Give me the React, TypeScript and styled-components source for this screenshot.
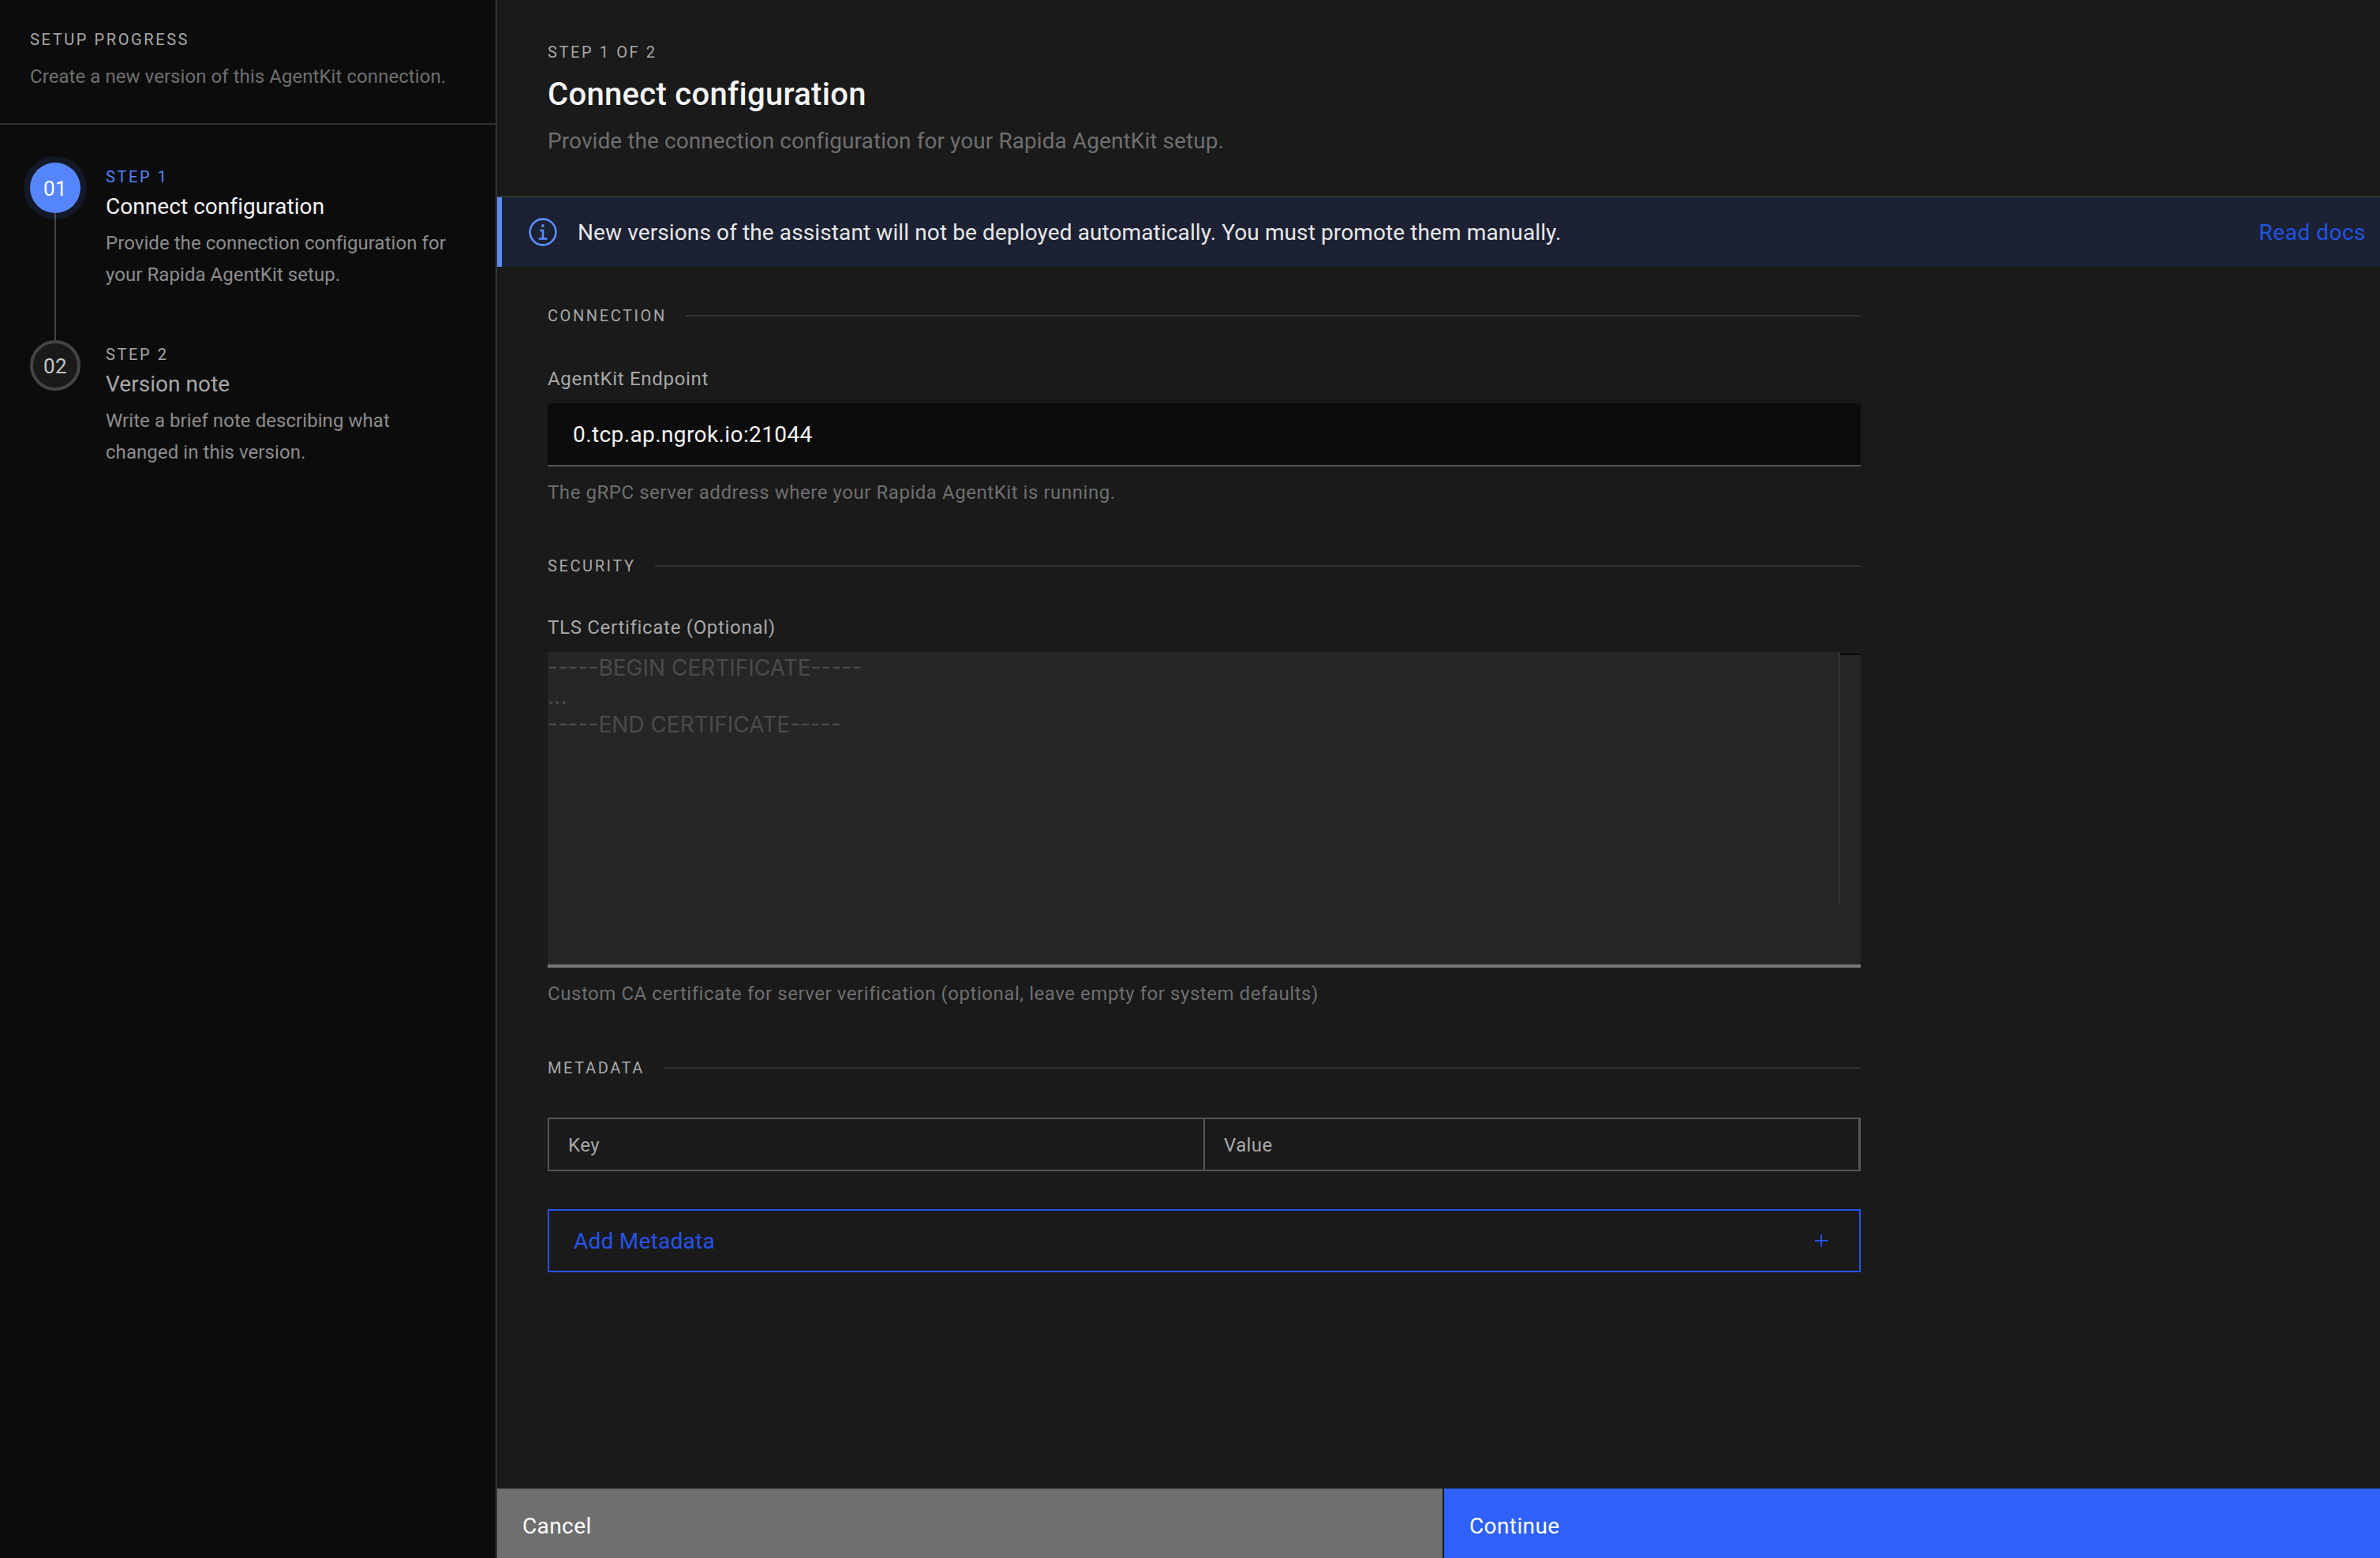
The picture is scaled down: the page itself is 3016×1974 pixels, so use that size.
import React from "react";
import styled, { createGlobalStyle } from "styled-components";

const Global = createGlobalStyle`
  html, body { margin: 0; padding: 0; background: #1a1a1a; }
  * { box-sizing: border-box; }
`;
const font = `"Roboto", "Liberation Sans", sans-serif`;

const Shell = styled.div`
  display: grid; grid-template-columns: 630px 1fr; height: 1974px; width: 3016px; overflow: hidden;
  font-family: ${font}; background: #1a1a1a;
`;
const Sidebar = styled.aside`
  background: #0c0c0c; border-right: 2px solid #333; display: flex; flex-direction: column;
`;
const SideHeader = styled.header`
  height: 158px; border-bottom: 2px solid #333; padding: 38px 38px 0;
`;
const Eyebrow = styled.div<{ $color?: string }>`
  font-size: 20px; line-height: 24px; letter-spacing: 2.6px; text-transform: uppercase; color: ${p => p.$color || "#a8a8a8"};
`;
const SideNote = styled.p`
  margin: 19px 0 0; font-size: 24px; line-height: 32px; color: #6f6f6f; letter-spacing: .06px; white-space: nowrap;
`;
const Steps = styled.ol`
  list-style: none; margin: 0; padding: 48px 0 0 38px;
`;
const Step = styled.li`
  display: grid; grid-template-columns: 64px 1fr; column-gap: 32px; height: 225px; position: relative;
`;
const Marker = styled.div<{ $active?: boolean }>`
  width: 64px; height: 64px; border-radius: 50%; display: flex; align-items: center; justify-content: center;
  font-size: 26px; letter-spacing: .5px; z-index: 1; padding-top: 2px;
  background: ${p => p.$active ? "#5585fb" : "#1a1a1a"};
  color: ${p => p.$active ? "#fff" : "#c6c6c6"};
  border: ${p => p.$active ? "0" : "4px solid #444"};
  box-shadow: ${p => p.$active ? "0 0 0 8px rgba(85,133,251,.11)" : "none"};
`;
const Rail = styled.span`
  position: absolute; left: 31px; top: 64px; width: 2px; height: 161px; background: #444;
`;
const StepBody = styled.div`
  padding-top: 6px; max-width: 450px;
`;
const StepTitle = styled.div<{ $active?: boolean }>`
  margin-top: 6px; font-size: 28px; line-height: 40px; color: ${p => p.$active ? "#f4f4f4" : "#a8a8a8"}; letter-spacing: .05px;
`;
const StepDesc = styled.p`
  margin: 7px 0 0; font-size: 24px; line-height: 39.5px; color: #8d8d8d; letter-spacing: .06px;
`;
const Main = styled.main`
  display: flex; flex-direction: column; min-width: 0; height: 1974px;
`;
const MainHeader = styled.header`
  height: 250px; padding: 54px 64px 0; border-bottom: 2px solid #333;
`;
const Title = styled.h1`
  margin: 15px 0 0; font-size: 40px; line-height: 54px; font-weight: 500; color: #f4f4f4; letter-spacing: .3px;
`;
const Subtitle = styled.p`
  margin: 14px 0 0; font-size: 28px; line-height: 36px; color: #6f6f6f; letter-spacing: .08px;
`;
const Banner = styled.div`
  height: 88px; background: #1c2133; border-left: 6px solid #5a8fff; display: flex; align-items: center; padding: 0 18px 0 34px;
  color: #e8e8e8; font-size: 28px;
`;
const BannerText = styled.span`
  margin-left: 26px; flex: 1; letter-spacing: .11px;
`;
const DocsLink = styled.a`
  color: #1f54e2; font-size: 28px; text-decoration: none; letter-spacing: .5px;
`;
const Form = styled.div`
  flex: 1; width: 1792px; padding: 0 64px; min-height: 0;
`;
const SectionHead = styled.div<{ $top: number }>`
  display: flex; align-items: center; gap: 24px; height: 24px; margin-top: ${p => p.$top}px;
  font-size: 20px; letter-spacing: 2.6px; color: #a8a8a8; text-transform: uppercase;
  &::after { content: ""; flex: 1; height: 2px; background: #333; }
`;
const Label = styled.label<{ $top: number }>`
  display: block; font-size: 24px; line-height: 32px; color: #a8a8a8; margin-top: ${p => p.$top}px; letter-spacing: .7px;
`;
const EndpointInput = styled.div`
  height: 80px; margin-top: 15px; background: #0c0c0c; border-bottom: 2px solid #555; padding: 0 32px;
  display: flex; align-items: center; font-size: 28px; color: #f4f4f4; letter-spacing: .4px;
`;
const Helper = styled.p`
  margin: 17px 0 0; font-size: 24px; line-height: 32px; color: #6f6f6f; letter-spacing: .55px; white-space: nowrap;
`;
const CertArea = styled.div`
  position: relative; height: 400px; margin-top: 15px; background: #262626; border-bottom: 4px solid #777;
  font-family: "Inter", sans-serif; font-size: 28px; line-height: 36px; color: #4a4a4a; white-space: pre; padding-top: 2px;
`;
const Scroll = styled.span`
  position: absolute; top: 1px; right: 0; width: 28px; height: 320px; border-left: 2px solid #333;
  &::before { content: ""; display: block; height: 3px; background: #0c0c0c; }
`;
const KvRow = styled.div`
  display: grid; grid-template-columns: 829px 1fr; height: 68px; margin-top: 51px; border: 2px solid #555; border-right-width: 3px;
`;
const KvCell = styled.div`
  padding: 1px 24px 0; display: flex; align-items: center; font-size: 24px; color: #a8a8a8; letter-spacing: .4px;
  & + & { border-left: 2px solid #555; }
`;
const AddBtn = styled.div`
  height: 80px; margin-top: 48px; border: 2px solid #2554e8; color: #2554e8; display: flex; align-items: center;
  justify-content: space-between; padding: 0 40px 0 31px; font-size: 28px; letter-spacing: .25px;
`;
const Footer = styled.footer`
  height: 88px; display: grid; grid-template-columns: 1198px 1fr; column-gap: 2px;
`;
const FootBtn = styled.div<{ $primary?: boolean }>`
  background: ${p => p.$primary ? "#2e61f7" : "#6f6f6f"}; color: #fff; font-size: 28px; padding: 6px 32px 0; display: flex; align-items: center; letter-spacing: .4px;
`;

const InfoIcon = () => (
  <svg width="36" height="36" viewBox="0 0 36 36" fill="none" stroke="#5a8fff" strokeWidth="2.6">
    <circle cx="18" cy="18" r="16.4" />
    <path d="M12.5 26.5h11M18 26.5V16h-4" />
    <circle cx="18" cy="10" r="1.9" fill="#5a8fff" stroke="none" />
  </svg>
);
const Plus = () => (
  <svg width="16" height="16" viewBox="0 0 16 16" stroke="#2554e8" strokeWidth="2" fill="none">
    <path d="M8 0v16M0 8h16" />
  </svg>
);

const steps = [
  { n: "01", label: "Step 1", title: "Connect configuration", desc: "Provide the connection configuration for your Rapida AgentKit setup.", active: true },
  { n: "02", label: "Step 2", title: "Version note", desc: "Write a brief note describing what changed in this version.", active: false },
];

export default function App() {
  return (
    <Shell>
      <Global />
      <Sidebar>
        <SideHeader>
          <Eyebrow>Setup progress</Eyebrow>
          <SideNote>Create a new version of this AgentKit connection.</SideNote>
        </SideHeader>
        <Steps>
          {steps.map((s, i) => (
            <Step key={s.n}>
              <Marker $active={s.active}>{s.n}</Marker>
              {i === 0 && <Rail />}
              <StepBody>
                <Eyebrow $color={s.active ? "#5585fb" : "#a8a8a8"}>{s.label}</Eyebrow>
                <StepTitle $active={s.active}>{s.title}</StepTitle>
                <StepDesc>{s.desc}</StepDesc>
              </StepBody>
            </Step>
          ))}
        </Steps>
      </Sidebar>
      <Main>
        <MainHeader>
          <Eyebrow>Step 1 of 2</Eyebrow>
          <Title>Connect configuration</Title>
          <Subtitle>Provide the connection configuration for your Rapida AgentKit setup.</Subtitle>
        </MainHeader>
        <Banner>
          <InfoIcon />
          <BannerText>New versions of the assistant will not be deployed automatically. You must promote them manually.</BannerText>
          <DocsLink>Read docs</DocsLink>
        </Banner>
        <Form>
          <SectionHead $top={50}>Connection</SectionHead>
          <Label $top={52}>AgentKit Endpoint</Label>
          <EndpointInput>0.tcp.ap.ngrok.io:21044</EndpointInput>
          <Helper>The gRPC server address where your Rapida AgentKit is running.</Helper>
          <SectionHead $top={65}>Security</SectionHead>
          <Label $top={50}>TLS Certificate (Optional)</Label>
          <CertArea>
            {"-----BEGIN CERTIFICATE-----\n...\n-----END CERTIFICATE-----"}
            <Scroll />
          </CertArea>
          <Helper>Custom CA certificate for server verification (optional, leave empty for system defaults)</Helper>
          <SectionHead $top={66}>Metadata</SectionHead>
          <KvRow>
            <KvCell>Key</KvCell>
            <KvCell>Value</KvCell>
          </KvRow>
          <AddBtn>Add Metadata<Plus /></AddBtn>
        </Form>
        <Footer>
          <FootBtn>Cancel</FootBtn>
          <FootBtn $primary>Continue</FootBtn>
        </Footer>
      </Main>
    </Shell>
  );
}
